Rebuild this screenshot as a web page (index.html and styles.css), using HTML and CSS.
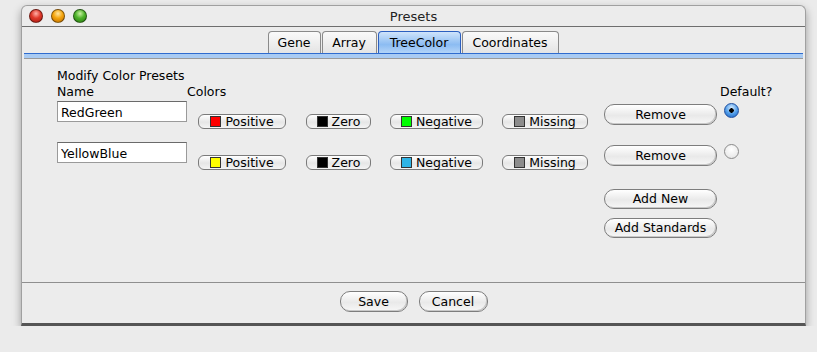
FILE: index.html
```html
<!DOCTYPE html>
<html lang="en-US">
  <head>
    <meta charset="utf-8"/>
    <title>Presets</title>
    <link rel="stylesheet" href="styles.css">
  </head>

  <body>
    <div class="window">
      <div class="titlebar">
        <span class="light red"></span>
        <span class="light yellow"></span>
        <span class="light green"></span>
        <span class="title">Presets</span>
      </div>

      <div class="tabs">
        <span class="tab tab-gene">Gene</span>
        <span class="tab tab-array">Array</span>
        <span class="tab tab-tree active">TreeColor</span>
        <span class="tab tab-coords">Coordinates</span>
      </div>
      <div class="band"></div>

      <div class="panel">
        <div class="caption">Modify Color Presets</div>
        <div class="heads">
          <span class="head-name">Name</span>
          <span class="head-colors">Colors</span>
          <span class="head-default">Default?</span>
        </div>

        <div class="preset">
          <input class="name" type="text" value="RedGreen">
          <div class="colors">
            <button class="swatch w-pos"><i style="background:#ff0000"></i>Positive</button>
            <button class="swatch w-zero"><i style="background:#000000"></i>Zero</button>
            <button class="swatch w-neg"><i style="background:#00ff00"></i>Negative</button>
            <button class="swatch w-miss"><i style="background:#8c8c8c"></i>Missing</button>
          </div>
          <button class="pill remove">Remove</button>
          <span class="radio checked"></span>
        </div>

        <div class="preset">
          <input class="name" type="text" value="YellowBlue">
          <div class="colors">
            <button class="swatch w-pos"><i style="background:#ffff00"></i>Positive</button>
            <button class="swatch w-zero"><i style="background:#000000"></i>Zero</button>
            <button class="swatch w-neg"><i style="background:#2fb4e6"></i>Negative</button>
            <button class="swatch w-miss"><i style="background:#8c8c8c"></i>Missing</button>
          </div>
          <button class="pill remove">Remove</button>
          <span class="radio"></span>
        </div>

        <div class="actions">
          <button class="pill add">Add New</button>
          <button class="pill add">Add Standards</button>
        </div>
      </div>

      <div class="footer">
        <button class="pill save">Save</button>
        <button class="pill cancel">Cancel</button>
      </div>
    </div>
  </body>
</html>
```

FILE: styles.css
```css
* {
  box-sizing: border-box;
}

body {
  margin: 0;
  background-color: #ebebeb;
  color: #000;
  font: 12.5px / 1.25 "DejaVu Sans", Helvetica, Arial, sans-serif;
}

.window {
  margin: 5px 0 0 21px;
  width: 785px;
  height: 321px;
  display: flex;
  flex-direction: column;
  background-color: #ececec;
  border: 1px solid #a0a0a0;
  border-bottom: 3px solid #555;
  border-radius: 6px 6px 0 0;
  box-shadow: 0 4px 8px rgba(0, 0, 0, 0.35);
}

.titlebar {
  height: 21px;
  display: flex;
  align-items: center;
  padding-left: 7px;
  gap: 8px;
  border-bottom: 1px solid #6e6e6e;
  position: relative;
}

.title {
  position: absolute;
  left: 0;
  right: 0;
  top: 3px;
  text-align: center;
  font-size: 13px;
  color: #222;
}

.light {
  width: 14px;
  height: 14px;
  border-radius: 50%;
  border: 1px solid rgba(0, 0, 0, 0.45);
}

.red {
  background: radial-gradient(circle at 50% 30%, #ffb0a8 0, #e0392b 45%, #a81a10 100%);
}

.yellow {
  background: radial-gradient(circle at 50% 30%, #ffe6a0 0, #f4a50d 45%, #c06c00 100%);
}

.green {
  background: radial-gradient(circle at 50% 30%, #c8f0a0 0, #4db32a 45%, #2a7a10 100%);
}

.tabs {
  height: 26px;
  display: flex;
  justify-content: center;
  align-items: flex-end;
  gap: 1px;
  padding-right: 1px;
}

.tab {
  height: 22px;
  display: flex;
  justify-content: center;
  align-items: center;
  padding-top: 1px;
  font-size: 12.5px;
  background: linear-gradient(#fafafa, #e4e4e4);
  border: 1px solid #8a8a8a;
  border-bottom: none;
  border-radius: 4px 4px 0 0;
}

.tab-gene { width: 53px; }
.tab-array { width: 55px; }
.tab-tree { width: 83px; }
.tab-coords { width: 97px; }

.tab.active {
  background: linear-gradient(#cfe4fb, #8cbcf2 60%, #b3d4f8);
  border-color: #2c5fbf;
}

.band {
  height: 6px;
  margin: 0 2px;
  background: linear-gradient(#2f6ccf 0 1px, #a9cbf3 1px 5px, #9a9a9a 5px);
}

.panel {
  flex: 1;
  padding: 9px 0 0 35px;
  border-bottom: 1px solid #8f8f8f;
}

.caption,
.heads {
  height: 16px;
}

.heads {
  display: flex;
  margin-bottom: 1px;
}

.head-name {
  width: 130px;
}

.head-colors {
  width: 533px;
}

.preset {
  display: flex;
  align-items: flex-start;
  height: 41px;
}

.name {
  width: 130px;
  height: 21px;
  margin: 0;
  padding: 1px 3px 0;
  font: inherit;
  font-size: 12.5px;
  background: #fff;
  border: 1px solid #9a9a9a;
  border-top-color: #6a6a6a;
}

.colors {
  display: flex;
  margin: 13px 0 0 11px;
}

button {
  font: inherit;
  color: #000;
  margin: 0;
  padding: 0;
}

.swatch {
  height: 15px;
  display: flex;
  justify-content: center;
  align-items: center;
  gap: 4px;
  font-size: 12.5px;
  background: linear-gradient(#ffffff, #e6e6e6 55%, #f4f4f4);
  border: 1px solid #7a7a7a;
  border-radius: 6px;
  margin-right: 19px;
}

.swatch i {
  width: 11px;
  height: 11px;
  border: 1px solid #333;
}

.w-pos { width: 88px; margin-right: 20px; }
.w-zero { width: 65px; }
.w-neg { width: 93px; }
.w-miss { width: 86px; margin-right: 0; }

.pill {
  height: 21px;
  font-size: 12.5px;
  background: linear-gradient(#ffffff, #e9e9e9 55%, #f7f7f7);
  border: 1px solid #7d7d7d;
  border-radius: 10px;
  box-shadow: inset -1px -1px 0 #c8c8c8;
}

.remove {
  width: 113px;
  margin: 3px 0 0 16px;
}

.radio {
  width: 15px;
  height: 15px;
  margin: 2px 0 0 7px;
  border-radius: 50%;
  border: 1px solid #8a8a8a;
  background: radial-gradient(circle at 50% 35%, #ffffff, #e2e2e2);
}

.radio.checked {
  border-color: #1d4ea0;
  background: radial-gradient(circle, #000 0 2px, transparent 2.5px),
    radial-gradient(circle at 50% 30%, #d8ecff 0, #4f9ce8 55%, #1c5fbd 100%);
}

.actions {
  display: flex;
  flex-direction: column;
  gap: 9px;
  margin: 6px 0 0 547px;
}

.add {
  width: 113px;
  height: 20px;
}

.footer {
  height: 40px;
  display: flex;
  justify-content: center;
  align-items: center;
  gap: 11px;
  padding-bottom: 3px;
}

.save { width: 68px; }
.cancel { width: 69px; }
```
